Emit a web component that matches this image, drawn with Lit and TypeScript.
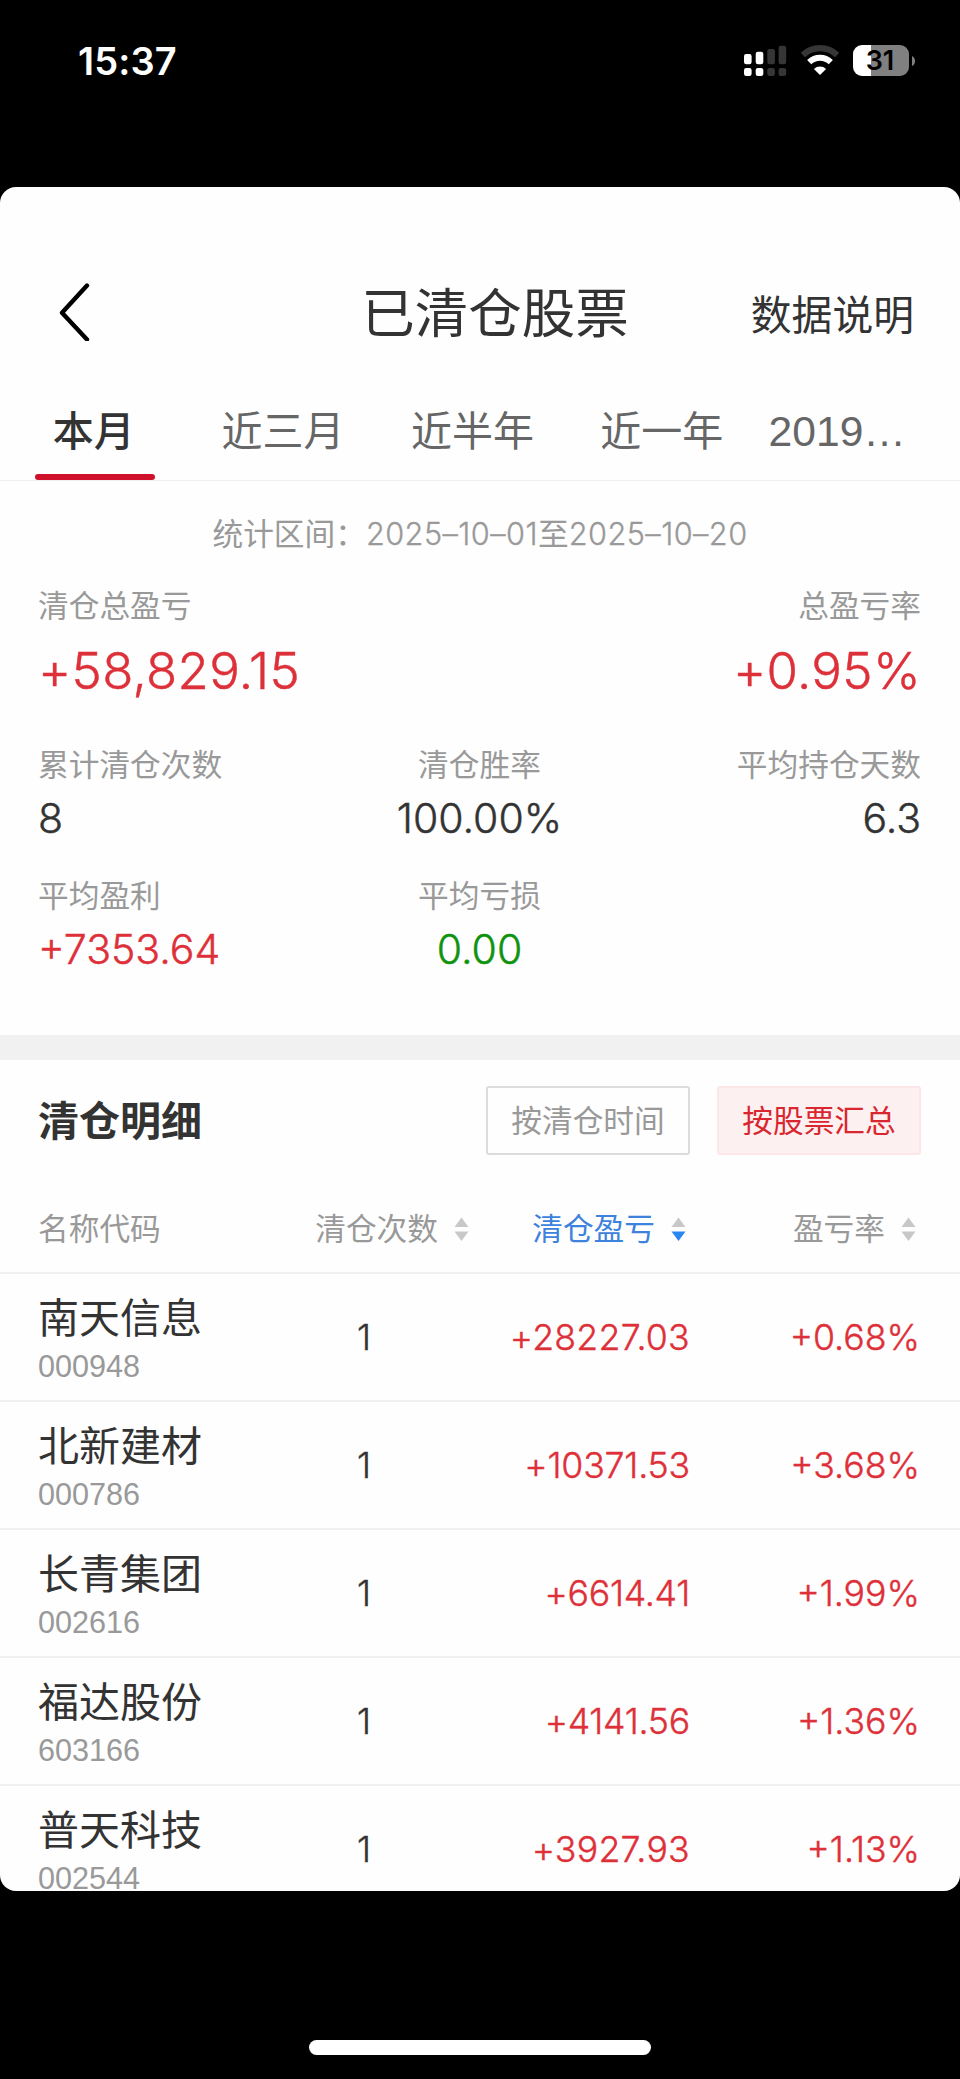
import { LitElement, html, css, svg } from "lit";
import { customElement, property } from "lit/decorators.js";
import { classMap } from "lit/directives/class-map.js";
import { styleMap } from "lit/directives/style-map.js";

interface Holding {
  name: string;
  code: string;
  count: number;
  profit: string;
  rate: string;
}

const TABS = ["本月", "近三月", "近半年", "近一年", "2019…"];

const HOLDINGS: Holding[] = [
  { name: "南天信息", code: "000948", count: 1, profit: "+28227.03", rate: "+0.68%" },
  { name: "北新建材", code: "000786", count: 1, profit: "+10371.53", rate: "+3.68%" },
  { name: "长青集团", code: "002616", count: 1, profit: "+6614.41", rate: "+1.99%" },
  { name: "福达股份", code: "603166", count: 1, profit: "+4141.56", rate: "+1.36%" },
  { name: "普天科技", code: "002544", count: 1, profit: "+3927.93", rate: "+1.13%" },
];

// Tightens a figure in proportion to how many narrow "1" digits it holds.
const tracking = (text: string) => {
  const ones = text.split("1").length - 1;
  return { letterSpacing: `${(0.25 - (2 * ones) / text.length).toFixed(2)}px` };
};

@customElement("status-bar")
export class StatusBar extends LitElement {
  static styles = css`
    :host {
      display: flex;
      justify-content: space-between;
      height: 187px;
      box-sizing: border-box;
      padding: 36px 45px 0 78px;
      color: #fff;
    }
    .time {
      font-size: 38px;
      line-height: 50px;
      font-weight: 600;
      letter-spacing: 0.1px;
    }
    .icons {
      display: flex;
      align-items: flex-start;
      padding-top: 9px;
    }
    .signal {
      margin-right: 13px;
    }
    .wifi {
      margin-right: 13px;
    }
    .battery {
      display: flex;
      align-items: center;
      gap: 3px;
    }
    .cell {
      width: 56px;
      height: 31px;
      border-radius: 9px;
      background: linear-gradient(to right, #fff 18px, #808080 18px);
      color: #000;
      font-size: 27px;
      line-height: 31px;
      font-weight: 600;
      text-align: center;
      text-indent: -2px;
    }
    svg {
      display: block;
    }
  `;

  render() {
    const columns = [
      { x: 0, top: 9, on: true },
      { x: 11.7, top: 6.7, on: true },
      { x: 23.3, top: 4, on: false },
      { x: 34.6, top: 0.7, on: false },
    ];
    return html`
      <div class="time">15:37</div>
      <div class="icons">
        <svg class="signal" width="43" height="31" viewBox="0 0 43 31">
          ${columns.map(
            (c) => svg`
              <g fill=${c.on ? "#fff" : "#363636"}>
                <rect x=${c.x} y=${c.top} width="7.6" height=${19.3 - c.top} rx="2.2"></rect>
                <rect x=${c.x} y="23" width="7.6" height="8" rx="2.2"></rect>
              </g>`,
          )}
        </svg>
        <svg class="wifi" width="40" height="31" viewBox="0 0 40 31">
          <path d="M2.800 10 A25 25 0 0 1 37.200 10" fill="none" stroke="#363636" stroke-width="6.200"></path>
          <path d="M9.200 17.200 A15.600 15.600 0 0 1 30.800 17.200" fill="none" stroke="#fff" stroke-width="6"></path>
          <path d="M20 30 L13.900 24 A8.800 8.800 0 0 1 26.100 24 Z" fill="#fff"></path>
        </svg>
        <div class="battery">
          <div class="cell">31</div>
          <svg width="3" height="10" viewBox="0 0 3 10"><path d="M0 0 Q3 1.5 3 5 Q3 8.500 0 10 Z" fill="#808080"></path></svg>
        </div>
      </div>
    `;
  }
}

@customElement("stat-item")
export class StatItem extends LitElement {
  @property() label = "";
  @property() value = "";
  @property({ reflect: true }) tone = "plain";
  @property({ type: Boolean, reflect: true }) large = false;

  static styles = css`
    :host {
      display: flex;
      flex-direction: column;
      gap: 5px;
      color: #333;
    }
    :host([large]) {
      gap: 12px;
    }
    .label {
      font-size: 30.7px;
      line-height: 46px;
      color: #999;
    }
    .value {
      font-size: 41px;
      line-height: 50px;
      font-weight: 300;
      -webkit-text-stroke: 0.45px currentColor;
      white-space: nowrap;
    }
    :host([large]) .value {
      font-size: 51px;
      line-height: 60px;
      letter-spacing: 0.3px;
    }
    :host([tone="up"]) .value {
      color: #dd3039;
    }
    :host([tone="down"]) .value {
      color: #0f930f;
    }
  `;

  render() {
    return html`
      <div class="label">${this.label}</div>
      <div class="value">${this.value}</div>
    `;
  }
}

@customElement("sort-header")
export class SortHeader extends LitElement {
  @property() label = "";
  @property({ type: Boolean, reflect: true }) active = false;

  static styles = css`
    :host {
      display: flex;
      align-items: center;
      justify-content: flex-end;
      gap: 16px;
      color: #999;
      white-space: nowrap;
    }
    :host([active]) {
      color: #3d82dc;
    }
    svg {
      display: block;
      flex: none;
      margin-right: 4px;
    }
  `;

  render() {
    return html`
      <span>${this.label}</span>
      <svg width="15" height="25" viewBox="0 0 15 25">
        <path d="M0.500 10 L7.500 0.500 L14.500 10 Z" fill="#c8c8c8"></path>
        <path d="M0.500 14.500 L7.500 24 L14.500 14.500 Z" fill=${this.active ? "#2a87ef" : "#c8c8c8"}></path>
      </svg>
    `;
  }
}

@customElement("app-root")
export class AppRoot extends LitElement {
  static styles = css`
    :host {
      display: flex;
      flex-direction: column;
      width: 960px;
      height: 2079px;
      background: #000;
      color: #333;
      font-family: Inter, "Noto Sans CJK SC", sans-serif;
      overflow: hidden;
    }
    .sheet {
      height: 1704px;
      box-sizing: border-box;
      padding-top: 85px;
      background: #fefefe;
      border-radius: 16px;
      overflow: hidden;
    }
    .header {
      display: grid;
      grid-template-columns: 1fr auto 1fr;
      align-items: center;
      height: 80px;
      padding: 0 46px 0 59px;
    }
    .back {
      display: block;
      margin-bottom: 3px;
    }
    .title {
      font-size: 53.5px;
      line-height: 76px;
      white-space: nowrap;
      padding-top: 4px;
      margin-left: 17px;
    }
    .explain {
      font-size: 40.8px;
      line-height: 60px;
      padding-top: 6px;
      text-align: right;
    }
    .tabs {
      display: grid;
      grid-template-columns: 189.4px 189.4px 189.4px 189.4px 1fr;
      height: 128px;
      border-bottom: 1px solid #eee;
      color: #666;
      font-size: 41px;
    }
    .tab {
      display: flex;
      flex-direction: column;
      align-items: center;
      padding-top: 49px;
      line-height: 61px;
      text-indent: -2px;
    }
    .tab.active {
      color: #333;
      font-weight: 500;
    }
    .tab.active::after {
      content: "";
      width: 120px;
      height: 6px;
      margin-top: 12px;
      border-radius: 3px;
      background: #d0112b;
    }
    .tab.year {
      align-items: flex-start;
      padding-left: 13px;
      font-family: "Liberation Sans", sans-serif;
      font-size: 42.6px;
    }
    .period {
      margin-top: 30px;
      font-size: 30.7px;
      line-height: 46px;
      color: #999;
      text-align: center;
    }
    .date {
      font-weight: 300;
      letter-spacing: 0.45px;
      -webkit-text-stroke: 0.3px currentColor;
    }
    .summary {
      display: grid;
      grid-template-columns: 1fr 1fr 1fr;
      padding: 26px 39px 61px 38px;
    }
    .wide {
      grid-column: span 2;
    }
    .center {
      text-align: center;
    }
    .right {
      text-align: right;
    }
    .second {
      padding-top: 41px;
    }
    .third {
      padding-top: 30px;
    }
    .band {
      height: 25px;
      background: #f1f1f1;
    }
    .section {
      display: flex;
      align-items: center;
      padding: 26px 39px 0 38px;
    }
    .section-title {
      flex: 1;
      font-size: 41px;
      line-height: 60px;
      font-weight: 600;
    }
    .mode {
      box-sizing: border-box;
      width: 204px;
      height: 69px;
      margin-left: 27px;
      border: 2px solid #dcdcdc;
      border-radius: 3px;
      color: #999;
      font-size: 30.7px;
      line-height: 66px;
      text-align: center;
    }
    .mode.selected {
      border-color: #fce6e7;
      background: #fdf0f1;
      color: #d9262f;
    }
    .row {
      display: grid;
      grid-template-columns: 277px 158px 217px 1fr;
      align-items: center;
      padding: 0 40px 0 38px;
      border-bottom: 2px solid #f0f0f0;
    }
    .head {
      padding-top: 51px;
      padding-bottom: 20px;
      font-size: 30.7px;
      line-height: 46px;
      color: #999;
    }
    .item {
      height: 126px;
    }
    .name {
      font-size: 41px;
      line-height: 56px;
    }
    .code {
      margin-top: 2px;
      font-family: "Liberation Sans", sans-serif;
      font-size: 30.6px;
      line-height: 36px;
      color: #999;
    }
    .count,
    .amount {
      font-size: 35.7px;
      line-height: 46px;
      font-weight: 300;
      -webkit-text-stroke: 0.4px currentColor;
    }
    .count {
      text-align: center;
      padding-right: 60px;
    }
    .amount {
      color: #dd3039;
      text-align: right;
    }
    .home {
      width: 342px;
      height: 15px;
      margin: 149px auto 0;
      border-radius: 8px;
      background: #fff;
    }
  `;

  render() {
    return html`
      <status-bar></status-bar>
      <main class="sheet">
        <div class="header">
          <svg class="back" width="32" height="60" viewBox="0 0 32 60">
            <path d="M28 4.500 L3 31.700 L28 58.500" fill="none" stroke="#000" stroke-width="4.400" stroke-linecap="round" stroke-linejoin="round"></path>
          </svg>
          <div class="title">已清仓股票</div>
          <div class="explain">数据说明</div>
        </div>
        <div class="tabs">
          ${TABS.map(
            (tab, i) => html`<div class=${classMap({ tab: true, active: i === 0, year: i === 4 })}>${tab}</div>`,
          )}
        </div>
        <div class="period">统计区间：<span class="date">2025–10–01</span>至<span class="date">2025–10–20</span></div>
        <div class="summary">
          <stat-item class="wide" large tone="up" label="清仓总盈亏" value="+58,829.15"></stat-item>
          <stat-item class="right" large tone="up" label="总盈亏率" value="+0.95%"></stat-item>
          <stat-item class="second" label="累计清仓次数" value="8"></stat-item>
          <stat-item class="second center" label="清仓胜率" value="100.00%"></stat-item>
          <stat-item class="second right" label="平均持仓天数" value="6.3"></stat-item>
          <stat-item class="third" tone="up" label="平均盈利" value="+7353.64"></stat-item>
          <stat-item class="third center" tone="down" label="平均亏损" value="0.00"></stat-item>
        </div>
        <div class="band"></div>
        <div class="section">
          <div class="section-title">清仓明细</div>
          <div class="mode">按清仓时间</div>
          <div class="mode selected">按股票汇总</div>
        </div>
        <div class="row head">
          <div>名称代码</div>
          <sort-header label="清仓次数"></sort-header>
          <sort-header label="清仓盈亏" active></sort-header>
          <sort-header label="盈亏率"></sort-header>
        </div>
        ${HOLDINGS.map(
          (h) => html`
            <div class="row item">
              <div>
                <div class="name">${h.name}</div>
                <div class="code">${h.code}</div>
              </div>
              <div class="count">${h.count}</div>
              <div class="amount" style=${styleMap(tracking(h.profit))}>${h.profit}</div>
              <div class="amount">${h.rate}</div>
            </div>
          `,
        )}
      </main>
      <div class="home"></div>
    `;
  }
}
